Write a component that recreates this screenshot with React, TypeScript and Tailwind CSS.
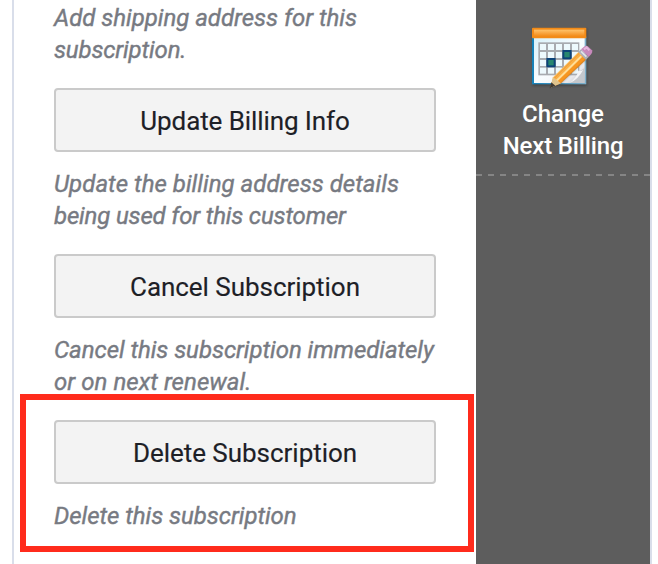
const ACTIONS = [
  {
    label: "Update Billing Info",
    labelClass: "tracking-[-0.1px]",
    lines: [
      { text: "Update the billing address details", className: "tracking-[0.03px]" },
      { text: "being used for this customer", className: "tracking-[-0.17px]" },
    ],
  },
  {
    label: "Cancel Subscription",
    labelClass: "tracking-[-0.04px]",
    lines: [
      { text: "Cancel this subscription immediately", className: "tracking-[-0.05px]" },
      { text: "or on next renewal.", className: "tracking-[0.05px]" },
    ],
  },
  {
    label: "Delete Subscription",
    labelClass: "tracking-[-0.04px]",
    lines: [{ text: "Delete this subscription", className: "tracking-[-0.04px]" }],
  },
];

export default function App() {
  return (
    <div className="flex h-[564px] w-[658px] overflow-hidden bg-white pl-3 font-['Roboto','Liberation_Sans',sans-serif]">
      <div className="flex w-[640px] border-x-2 border-[#d9deea]">
        <main className="relative w-[462px] shrink-0 pt-0.5 pl-10">
          <Note
            lines={[
              { text: "Add shipping address for this", className: "tracking-[-0.02px]" },
              { text: "subscription.", className: "tracking-[-0.15px]" },
            ]}
          />
          {ACTIONS.map((action) => (
            <section key={action.label} className="pt-[22px]">
              <ActionButton label={action.label} className={action.labelClass} />
              <div className="pt-4">
                <Note lines={action.lines} />
              </div>
            </section>
          ))}

          {/* Highlight around the delete action */}
          <div
            aria-hidden
            className="pointer-events-none absolute top-[394px] left-[6px] h-[158px] w-[454px] border-6 border-[#ff2b1c]"
          />
        </main>

        <aside className="w-[174px] shrink-0 bg-[#5d5d5d]">
          <button
            type="button"
            className="flex h-[174px] w-full flex-col items-center pt-[25px] text-2xl leading-8 font-medium text-white"
          >
            <CalendarEditIcon className="mr-0.5 h-[73px] w-16 shrink-0" />
            <span>Change</span>
            <span className="tracking-[-0.15px]">Next Billing</span>
          </button>
          <div className="h-0.5 bg-[repeating-linear-gradient(90deg,#858585_0_6px,transparent_6px_12px)]" />
        </aside>
      </div>
    </div>
  );
}

function ActionButton({ label, className }: { label: string; className: string }) {
  return (
    <button
      type="button"
      className="flex h-16 w-[382px] items-center justify-center rounded-[4px] border-2 border-[#cacaca] bg-[#f3f3f3] pt-0.5 text-[26px] whitespace-nowrap text-[#1d2026] [-webkit-text-stroke:0.15px_#1d2026]"
    >
      <span className={className}>{label}</span>
    </button>
  );
}

function Note({ lines }: { lines: { text: string; className: string }[] }) {
  return (
    <p className="text-2xl leading-8 whitespace-nowrap text-[#777a82] italic [-webkit-text-stroke:0.4px_#777a82]">
      {lines.map((line) => (
        <span key={line.text} className={`block ${line.className}`}>
          {line.text}
        </span>
      ))}
    </p>
  );
}

function CalendarEditIcon({ className }: { className?: string }) {
  return (
    <svg viewBox="0 0 192 219" className={className} aria-hidden>
      <defs>
        <linearGradient id="sheet" x1="0" y1="0" x2="1" y2="1">
          <stop offset="0" stopColor="#d8f1fa" />
          <stop offset="0.5" stopColor="#f8fdff" />
          <stop offset="0.75" stopColor="#f5f5f8" />
          <stop offset="1" stopColor="#b9bcc2" />
        </linearGradient>
        <linearGradient id="edge" x1="0" y1="0" x2="1" y2="0">
          <stop offset="0" stopColor="#1480b8" />
          <stop offset="1" stopColor="#7fb0cb" />
        </linearGradient>
        <linearGradient id="header" x1="0" y1="0" x2="0" y2="1">
          <stop offset="0" stopColor="#ffc36b" />
          <stop offset="1" stopColor="#f28a17" />
        </linearGradient>
        <linearGradient id="pencil" x1="0" y1="0" x2="1" y2="1">
          <stop offset="0.35" stopColor="#ffd27c" />
          <stop offset="0.5" stopColor="#f9a02c" />
          <stop offset="0.7" stopColor="#c56a12" />
        </linearGradient>
        <filter id="shade" x="-20%" y="-20%" width="140%" height="140%">
          <feGaussianBlur stdDeviation="3" />
        </filter>
      </defs>
      <rect x="8" y="12" width="163" height="170" rx="3" fill="#262626" opacity="0.5" filter="url(#shade)" />
      <rect x="6" y="35" width="163" height="143" fill="url(#edge)" />
      <rect x="12" y="38" width="152" height="136" fill="url(#sheet)" />
      <rect x="6" y="8" width="163" height="32" rx="3" fill="#f28b18" />
      <rect x="12" y="14" width="151" height="20" fill="url(#header)" />
      <rect x="25" y="52" width="123" height="99" fill="#a8abb0" />
      {[30, 54, 78, 102, 126].map((x) =>
        [57, 81, 105, 128].map((y) => (
          <rect key={`${x}-${y}`} x={x} y={y} width="18" height="18" fill="#edf9fd" />
        )),
      )}
      <rect x="97" y="75" width="28" height="28" fill="#0c4378" />
      <rect x="103" y="81" width="16" height="16" fill="#27866f" />
      <rect x="49" y="99" width="28" height="28" fill="#0c4378" />
      <rect x="55" y="105" width="16" height="16" fill="#27866f" />
      <path d="M119 174Q146 158 145 137Q157 138 164 127V174Z" fill="#c4c7cc" />
      <path d="M119 174Q141 157 145 137Q153 139 160 134Q143 165 119 174Z" fill="#f3f3f5" />
      <path d="M63 189L92 177L167 104L153 90L72 165Z" fill="#333" opacity="0.4" filter="url(#shade)" />
      <path d="M61 188L69 157L145 81L168 104L93 175Z" fill="url(#pencil)" />
      <path d="M73 160L148 85" stroke="#f0a03a" strokeWidth="4" />
      <path d="M79 168L154 94" stroke="#ffdd97" strokeWidth="6" />
      <path d="M86 172L161 100" stroke="#f8961f" strokeWidth="7" />
      <path d="M61 188L69 157L93 175Z" fill="#e0c48d" />
      <path d="M59 190L64 172L76 182Z" fill="#3e3a35" />
      <path d="M145 81L153 73L176 96L168 104Z" fill="#aaaeb8" />
      <path d="M153 79L169 95" stroke="#e1e3e8" strokeWidth="5" />
      <path d="M153 73L162 65Q169 60 175 65L186 76Q189 81 184 87L176 96Z" fill="#c889bc" />
      <path d="M162 73L170 67L178 76" fill="none" stroke="#e4b8dd" strokeWidth="6" />
    </svg>
  );
}
